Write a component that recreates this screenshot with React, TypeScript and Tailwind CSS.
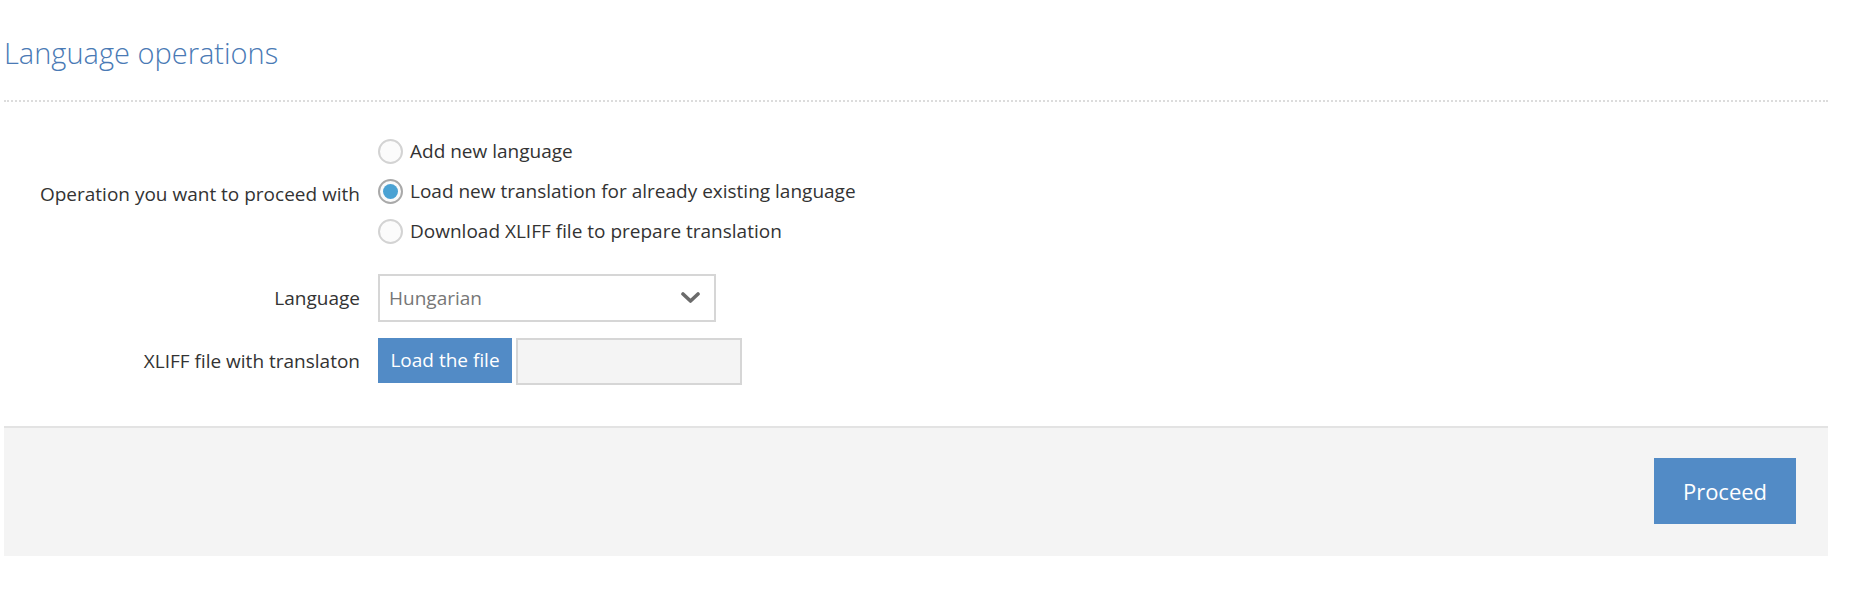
import React, { useState } from 'react';

const ops = [
  'Add new language',
  'Load new translation for already existing language',
  'Download XLIFF file to prepare translation',
];

function Radio({ checked }: { checked: boolean }) {
  return (
    <span
      className={
        'flex h-[25px] w-[25px] shrink-0 items-center justify-center rounded-full border-2 bg-[#fbfbfb] ' +
        (checked ? 'border-[#a9a9a9]' : 'border-[#d3d3d3]')
      }
    >
      {checked && <span className="h-[15px] w-[15px] rounded-full bg-[#4ba2d3]" />}
    </span>
  );
}

export default function App() {
  const [op, setOp] = useState(1);

  return (
    <div className="min-h-[600px] bg-white px-[4px] pr-[26px] text-[19px] text-[#333] [font-family:'Open_Sans',sans-serif]">
      <h1 className="pt-[33px] text-[29px] font-light leading-[40px] text-[#4a7ab5]">Language operations</h1>
      <div className="mt-[27px] border-b-2 border-dotted border-[#dcdcdc]" />

      <div className="mt-[29px] grid grid-cols-[356px_1fr] gap-x-[18px]">
        <div className="flex items-center justify-end pt-[6px]">Operation you want to proceed with</div>
        <div className="flex flex-col">
          {ops.map((t, i) => (
            <label
              key={t}
              className="flex h-[40px] cursor-pointer items-center gap-[7px]"
              onClick={() => setOp(i)}
            >
              <Radio checked={op === i} />
              <span>{t}</span>
            </label>
          ))}
        </div>

        <div className="mt-[23px] flex items-center justify-end">Language</div>
        <div className="mt-[23px]">
          <div className="flex h-[48px] w-[338px] items-center justify-between border-2 border-[#d6d6d6] bg-white pl-[9px] pr-[14px] text-[#777]">
            <span>Hungarian</span>
            <svg width="19" height="12" viewBox="0 0 19 12">
              <polyline points="2,2 9.5,9 17,2" fill="none" stroke="#6b6b6b" strokeWidth="3.6" strokeLinecap="round" strokeLinejoin="round" />
            </svg>
          </div>
        </div>

        <div className="mt-[16px] flex items-center justify-end">XLIFF file with translaton</div>
        <div className="mt-[16px] flex items-start gap-[4px]">
          <button className="flex h-[45px] w-[134px] items-center justify-center bg-[#528bc6] text-white">
            Load the file
          </button>
          <div className="h-[47px] w-[226px] border-2 border-[#d6d6d6] bg-[#f4f4f4]" />
        </div>
      </div>

      <div className="mt-[41px] flex h-[130px] items-start justify-end border-t-2 border-[#e3e3e3] bg-[#f4f4f4] pr-[32px] pt-[30px]">
        <button className="flex h-[66px] w-[142px] items-center justify-center bg-[#528bc6] text-[22px] text-white">
          Proceed
        </button>
      </div>
    </div>
  );
}
